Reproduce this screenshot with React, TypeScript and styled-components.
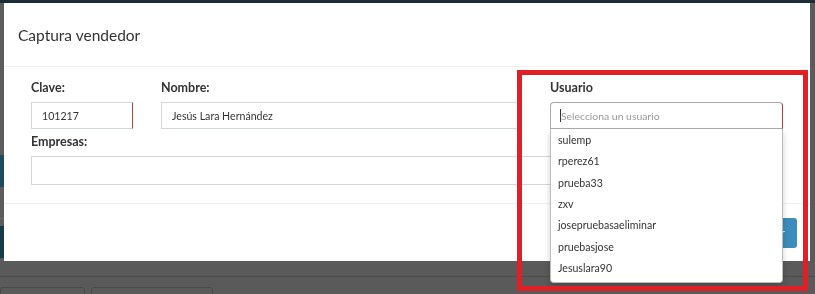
import React from 'react';
import styled, { createGlobalStyle } from 'styled-components';

const usuarios = [
  'sulemp',
  'rperez61',
  'prueba33',
  'zxv',
  'josepruebasaeliminar',
  'pruebasjose',
  'Jesuslara90',
];

function App() {
  return (
    <>
      <GlobalStyle />
      <Page>
        <TopBar />
        <Main>
          <SideStrip>
            <StripPart $h={152} />
            <StripPart $h={32} $color="#1d4b5f" />
            <StripPart $h={31} />
            <StripLine />
            <StripPart $h={7} />
            <StripPart $h={32} $color="#163b4b" />
          </SideStrip>
        </Main>
        <BottomArea>
          <BottomLine />
          <BottomButtons>
            <GhostButton $w={85} />
            <GhostButton $w={122} />
          </BottomButtons>
        </BottomArea>
      </Page>

      <Modal>
        <Header>
          <Title>Captura vendedor</Title>
        </Header>
        <Body>
          <Field>
            <Label>Clave:</Label>
            <Input $invalid>101217</Input>
          </Field>
          <Field>
            <Label>Nombre:</Label>
            <Input>Jesús Lara Hernández</Input>
          </Field>
          <SelectField>
            <Label>Usuario</Label>
            <Select>
              <Caret />
              <Placeholder>Selecciona un usuario</Placeholder>
            </Select>
            <Dropdown>
              {usuarios.map((u) => (
                <Option key={u}>{u}</Option>
              ))}
            </Dropdown>
          </SelectField>
          <WideField>
            <Label>Empresas:</Label>
            <Input $invalid $tall />
          </WideField>
        </Body>
        <Footer>
          <SaveButton>Guardar</SaveButton>
        </Footer>
      </Modal>

      <Highlight />
    </>
  );
}

export default App;

const GlobalStyle = createGlobalStyle`
  html, body {
    margin: 0;
    padding: 0;
    height: 100%;
  }
  body {
    background: #5a5a5a;
    font-family: Lato, "Liberation Sans", sans-serif;
    overflow: hidden;
  }
  * {
    box-sizing: border-box;
  }
`;

const Page = styled.div`
  height: 294px;
  overflow: hidden;
  display: flex;
  flex-direction: column;
`;

const TopBar = styled.div`
  flex-shrink: 0;
  height: 3px;
  background: #1a2e37;
`;

const Main = styled.div`
  flex-shrink: 0;
  height: 258px;
  display: flex;
`;

const SideStrip = styled.div`
  width: 4px;
  display: flex;
  flex-direction: column;
`;

const StripPart = styled.div<{ $h: number; $color?: string }>`
  height: ${({ $h }) => $h}px;
  background: ${({ $color }) => $color || '#5c5c5c'};
`;

const StripLine = styled.div`
  height: 1px;
  background: #6e6e6e;
`;

const BottomArea = styled.div`
  flex-shrink: 0;
  padding-top: 15px;
`;

const BottomLine = styled.div`
  height: 1px;
  background: #4b4b4b;
`;

const BottomButtons = styled.div`
  display: flex;
  gap: 6px;
  margin-top: 10px;
`;

const GhostButton = styled.div<{ $w: number }>`
  width: ${({ $w }) => $w}px;
  height: 20px;
  border: 1px solid #4a4a4a;
  border-radius: 3px;
`;

const Modal = styled.div`
  position: fixed;
  top: 3px;
  left: 4px;
  width: 806px;
  height: 258px;
  background: #fff;
  display: flex;
  flex-direction: column;
  color: #333;
`;

const Header = styled.div`
  height: 64px;
  padding: 0 14px;
  display: flex;
  align-items: center;
  border-bottom: 1px solid #f0f0f0;
`;

const Title = styled.h4`
  margin: 0;
  font-size: 15.5px;
  font-weight: 400;
  color: #333;
`;

const Body = styled.div`
  padding: 12px 27px 18px;
  display: grid;
  grid-template-columns: 102px 361px 233px;
  column-gap: 28px;
  row-gap: 4px;
`;

const Field = styled.div`
  display: flex;
  flex-direction: column;
`;

const SelectField = styled(Field)`
  position: relative;
`;

const WideField = styled(Field)`
  grid-column: 1 / -1;
`;

const Label = styled.label`
  font-size: 12.5px;
  font-weight: 700;
  line-height: 18px;
  margin-bottom: 5px;
  color: #333;
`;

const Input = styled.div<{ $invalid?: boolean; $tall?: boolean }>`
  height: ${({ $tall }) => ($tall ? 29 : 27)}px;
  border: 1px solid #d2d6de;
  border-right-color: ${({ $invalid }) => ($invalid ? '#b5473c' : '#d2d6de')};
  padding: 0 10px;
  display: flex;
  align-items: center;
  font-size: 10.6px;
  color: #333;
`;

const Select = styled.div`
  height: 27px;
  border: 1px solid #aaa;
  border-right-color: #a9443c;
  border-radius: 4px 4px 0 0;
  padding: 0 9px;
  display: flex;
  align-items: center;
  font-size: 10.4px;
`;

const Caret = styled.span`
  width: 1px;
  height: 13px;
  background: #333;
`;

const Placeholder = styled.span`
  color: #999;
`;

const Dropdown = styled.ul`
  position: absolute;
  top: 100%;
  left: 0;
  right: 0;
  margin: 0;
  padding: 1px 0 3px;
  list-style: none;
  background: #fff;
  border: 1px solid #bbb;
  border-top: none;
  border-radius: 0 0 4px 4px;
  box-shadow: 0 4px 6px rgba(0, 0, 0, 0.18);
  z-index: 5;
`;

const Option = styled.li`
  height: 21.33px;
  line-height: 21.33px;
  padding-left: 7px;
  font-size: 10.6px;
  color: #333;
`;

const Footer = styled.div`
  flex: 1;
  border-top: 1px solid #f0f0f0;
  display: flex;
  justify-content: flex-end;
  align-items: center;
  padding-right: 13px;
`;

const SaveButton = styled.button`
  height: 30px;
  padding: 0 12px;
  border: none;
  border-radius: 3px;
  background: #3c8dbc;
  color: #fff;
  font-family: inherit;
  font-size: 12px;
`;

const Highlight = styled.div`
  position: fixed;
  left: 517px;
  top: 70px;
  width: 291px;
  height: 221px;
  border: 5px solid #e01f27;
  pointer-events: none;
  z-index: 10;
`;
